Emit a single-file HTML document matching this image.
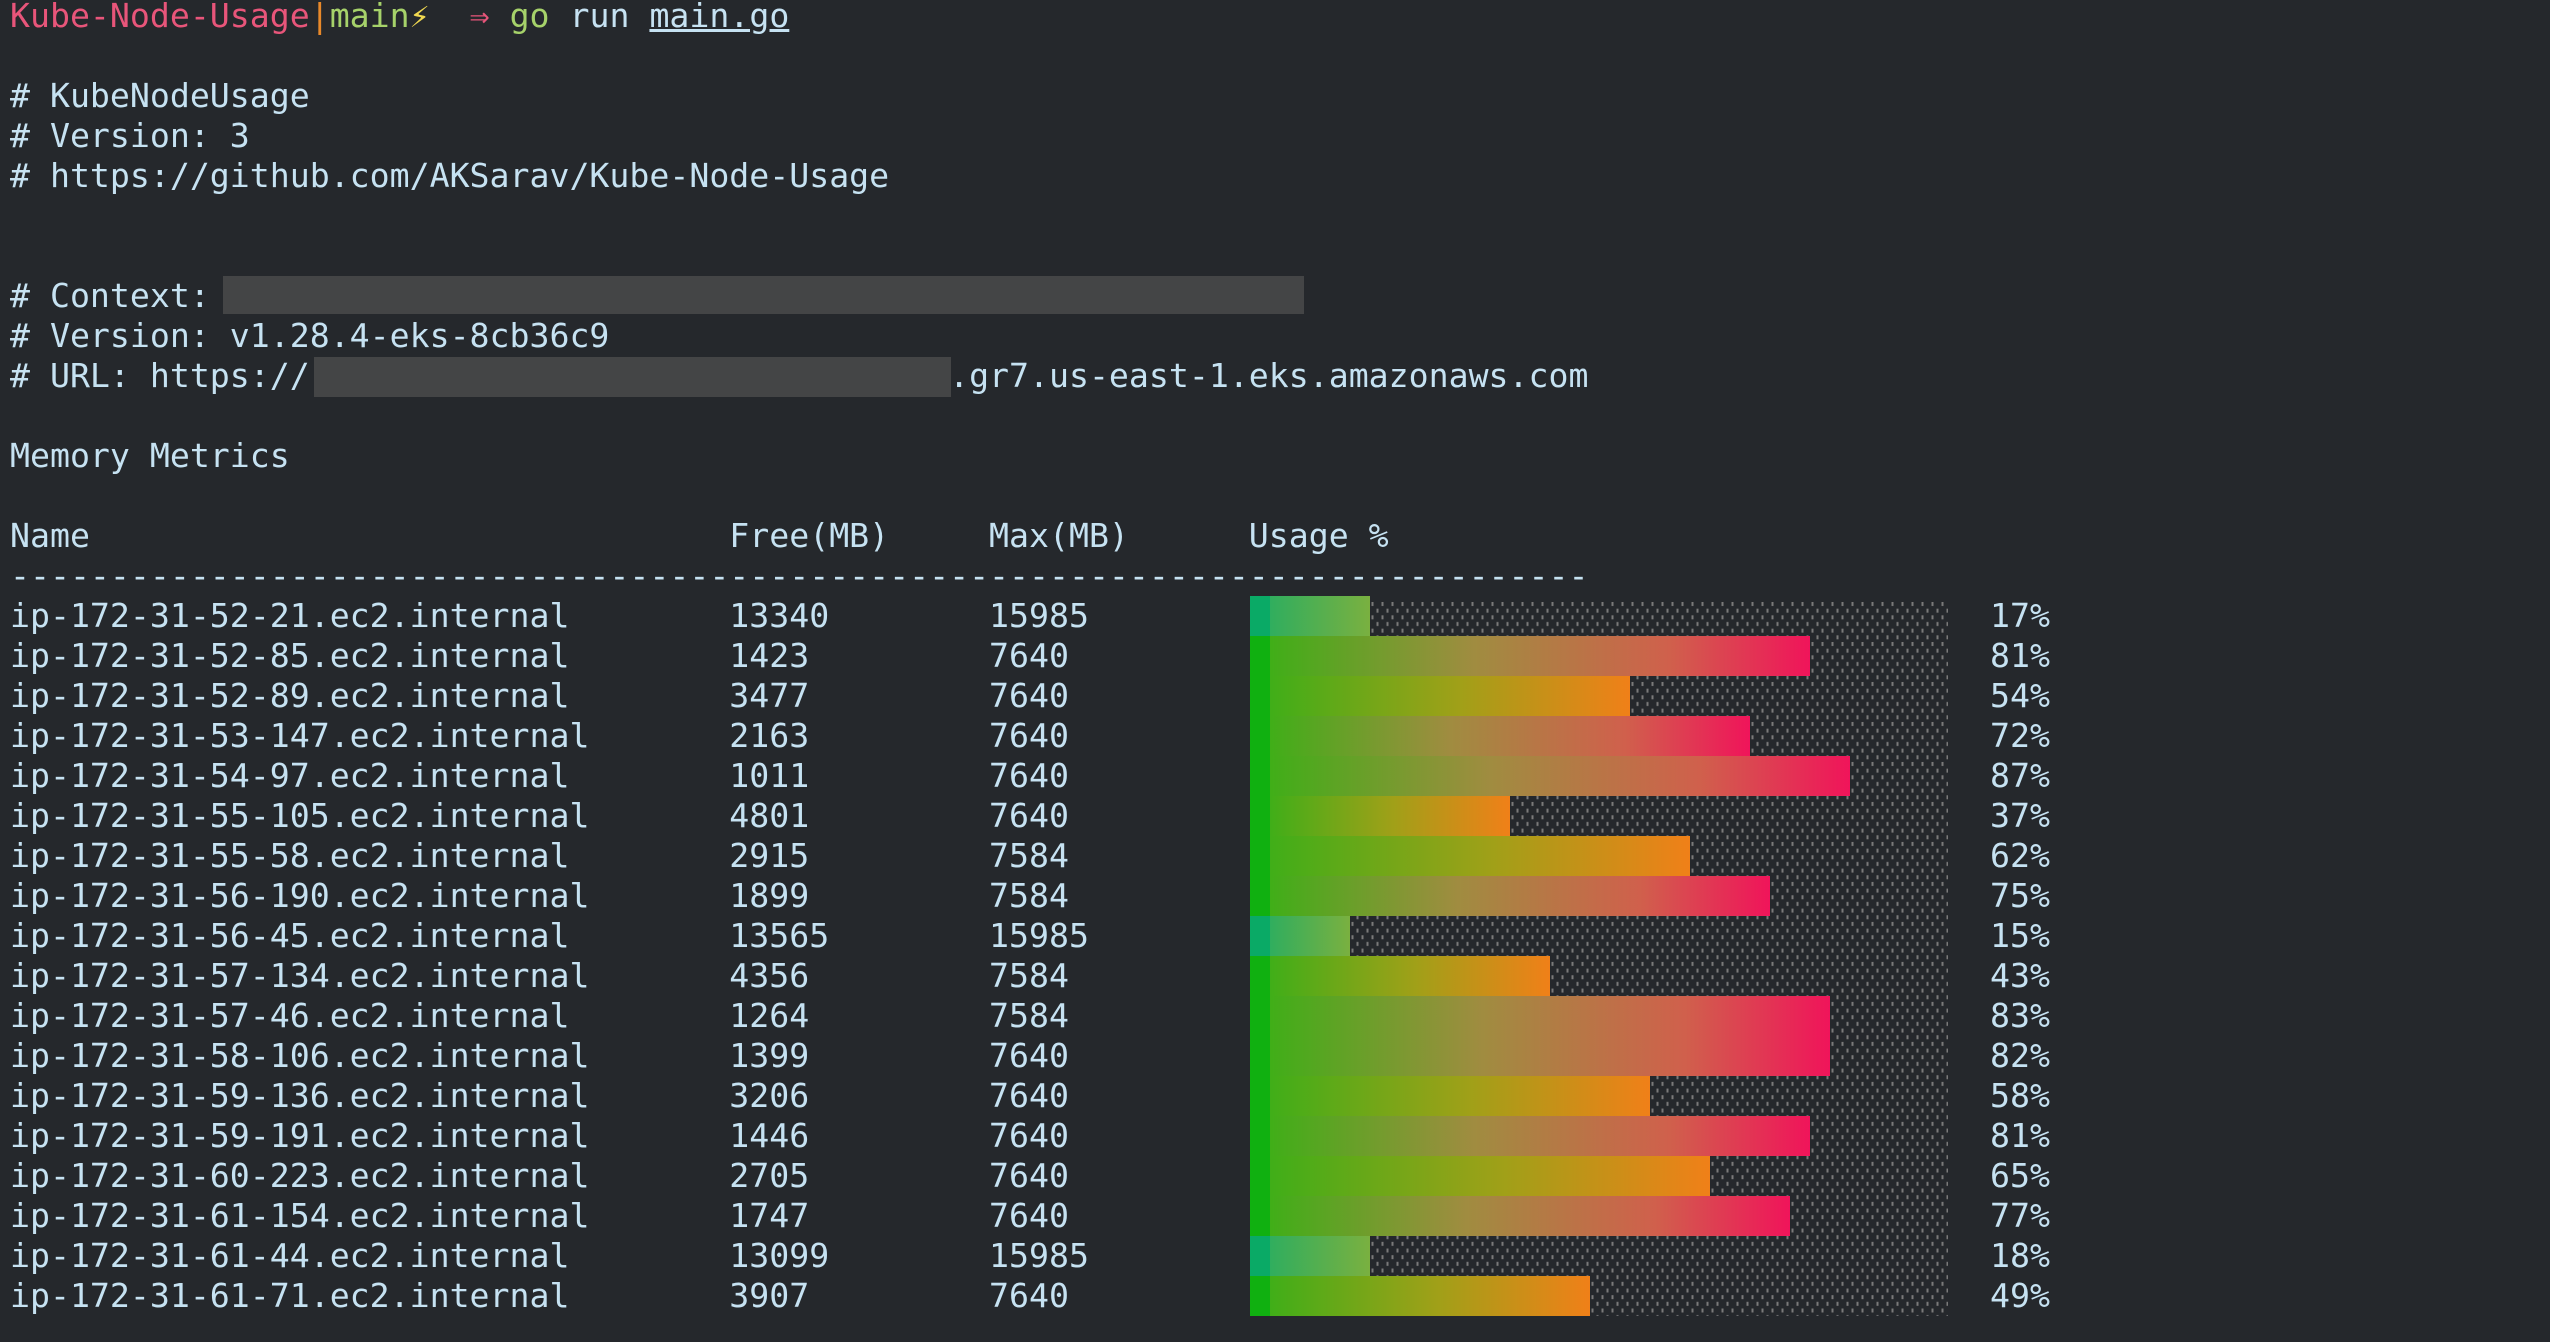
<!DOCTYPE html>
<html><head><meta charset="utf-8"><style>
html,body{margin:0;padding:0;background:#25282c;width:2550px;height:1342px;overflow:hidden}
body{font-family:"DejaVu Sans Mono","Liberation Mono",monospace;font-size:33.2px;color:#c6e2f2;position:relative}
.l{position:absolute;left:10px;height:40px;line-height:40px;white-space:pre}
.bar{position:absolute;left:1250px;height:40px}
.box{position:absolute;background:#444546}
.pct{position:absolute;left:1990px;height:40px;line-height:40px;white-space:pre}
</style></head><body>
<div class="l" style="top:-4px"><span style="color:#e8557a">Kube-Node-Usage</span><span style="color:#e8892a">|</span><span style="color:#a6d26a">main</span><span style="color:#f0d850">⚡</span>  <span style="color:#e8557a">⇒</span> <span style="color:#a6d26a">go</span> run <span style="text-decoration:underline">main.go</span></div>
<div class="l" style="top:76px"># KubeNodeUsage</div>
<div class="l" style="top:116px"># Version: 3</div>
<div class="l" style="top:156px"># https://github.com/AKSarav/Kube-Node-Usage</div>
<div class="l" style="top:276px"># Context: </div>
<div class="box" style="left:223px;top:276px;width:1081px;height:38px"></div>
<div class="l" style="top:316px"># Version: v1.28.4-eks-8cb36c9</div>
<div class="l" style="top:356px"># URL: https://                                .gr7.us-east-1.eks.amazonaws.com</div>
<div class="box" style="left:314px;top:357px;width:637px;height:40px"></div>
<div class="l" style="top:436px">Memory Metrics</div>
<div class="l" style="top:516px">Name                                Free(MB)     Max(MB)      Usage %</div>
<div class="l" style="top:556px">-------------------------------------------------------------------------------</div>
<svg style="position:absolute;left:1250px;top:602px" width="698" height="714">
<defs><pattern id="p" width="10" height="13.33" patternUnits="userSpaceOnUse">
<rect x="1.5" y="0" width="2" height="4" fill="#7a7a7a"/><rect x="6.5" y="6.67" width="2" height="4" fill="#7a7a7a"/></pattern></defs>
<rect width="698" height="714" fill="url(#p)"/></svg>
<div id="rows"></div>
<script>
var d=[["ip-172-31-52-21.ec2.internal",13340,15985,17],["ip-172-31-52-85.ec2.internal",1423,7640,81],["ip-172-31-52-89.ec2.internal",3477,7640,54],["ip-172-31-53-147.ec2.internal",2163,7640,72],["ip-172-31-54-97.ec2.internal",1011,7640,87],["ip-172-31-55-105.ec2.internal",4801,7640,37],["ip-172-31-55-58.ec2.internal",2915,7584,62],["ip-172-31-56-190.ec2.internal",1899,7584,75],["ip-172-31-56-45.ec2.internal",13565,15985,15],["ip-172-31-57-134.ec2.internal",4356,7584,43],["ip-172-31-57-46.ec2.internal",1264,7584,83],["ip-172-31-58-106.ec2.internal",1399,7640,82],["ip-172-31-59-136.ec2.internal",3206,7640,58],["ip-172-31-59-191.ec2.internal",1446,7640,81],["ip-172-31-60-223.ec2.internal",2705,7640,65],["ip-172-31-61-154.ec2.internal",1747,7640,77],["ip-172-31-61-44.ec2.internal",13099,15985,18],["ip-172-31-61-71.ec2.internal",3907,7640,49]];
function pad(s,n){s=String(s);while(s.length<n)s+=" ";return s}
var h="";
for(var i=0;i<d.length;i++){var r=d[i],t=596+40*i,p=r[3],n=Math.round(p*35/100),w=n*20,g;
if(p<30)g="linear-gradient(90deg,#0aaa66 0 20px,#30ae5e 20px,#7ab040)";
else if(p<70)g="linear-gradient(90deg,#10b010 0 20px,#40ae18 20px,#a0a018 55%,#f08018)";
else g="linear-gradient(90deg,#10b010 0 20px,#40ae18 20px,#a08c40 40%,#d0604c 75%,#f0145a)";
h+='<div class="l" style="top:'+t+'px">'+pad(r[0],36)+pad(r[1],13)+r[2]+'</div>';
h+='<div class="bar" style="top:'+t+'px;width:'+w+'px;background:'+g+'"></div>';
h+='<div class="pct" style="top:'+t+'px">'+p+'%</div>';}
document.getElementById("rows").innerHTML=h;
</script>
</body></html>
